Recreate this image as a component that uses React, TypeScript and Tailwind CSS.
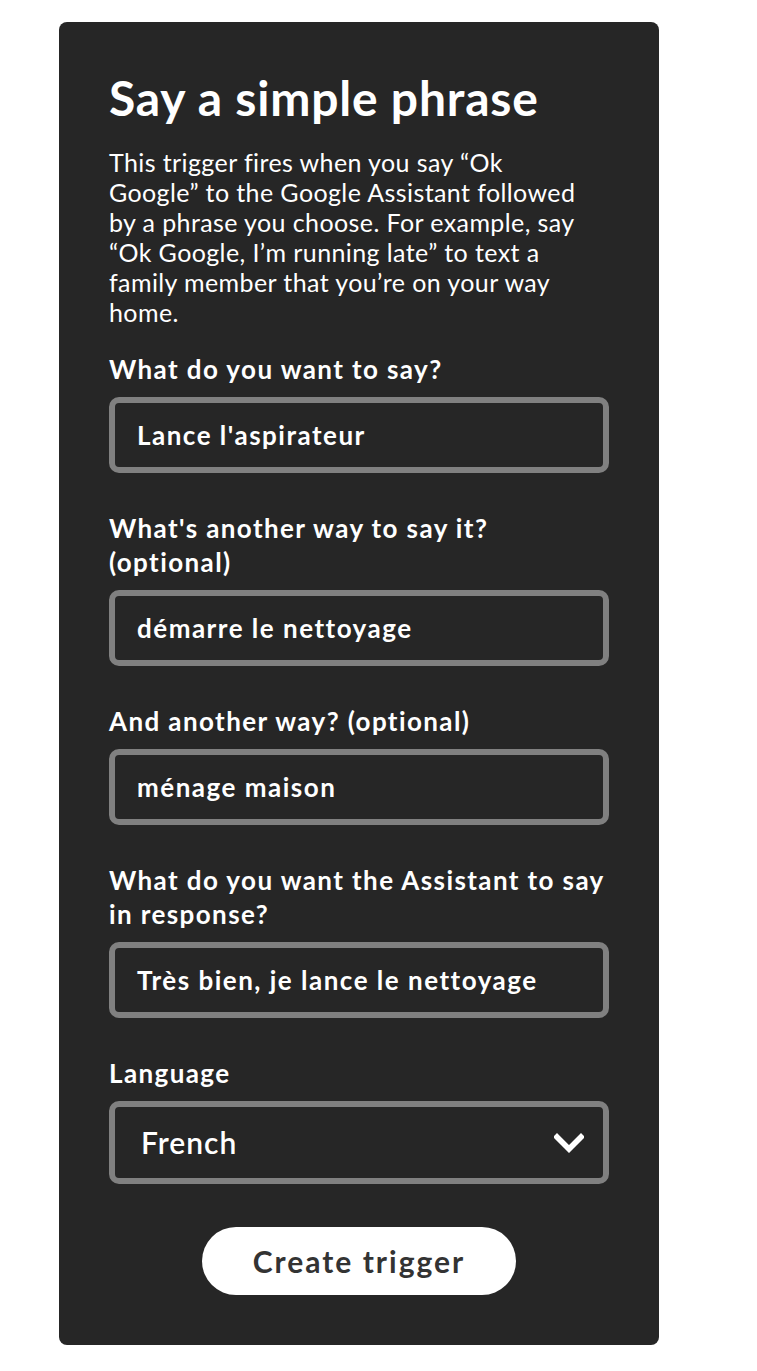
const baseFont = { fontFamily: "Lato, 'Open Sans', sans-serif" };

function Field({ label, value, first }: { label: React.ReactNode; value: string; first?: boolean }) {
  return (
    <div className={first ? "mt-[25px]" : "mt-[38px]"}>
      <label className="block text-[26px] font-bold leading-[34px] tracking-[1.4px] text-white">{label}</label>
      <div className="mt-[11px] flex h-[76px] items-center rounded-[10px] border-[6px] border-[#808080] px-[22px] text-[26px] font-bold tracking-[1.5px] text-white">
        {value}
      </div>
    </div>
  );
}

export default function App() {
  return (
    <div className="min-h-screen bg-white pl-[59px] pt-[22px]" style={baseFont}>
      <div className="w-[600px] rounded-lg bg-[#262626] px-[50px] pb-[50px] pt-[50px]">
        <h1 className="text-[48px] font-bold leading-[52px] tracking-[0.8px] text-white">Say a simple phrase</h1>
        <p className="mt-[23px] text-[25px] leading-[30px] tracking-[0.4px] text-white">
          This trigger fires when you say “Ok
          <br />
          Google” to the Google Assistant followed
          <br />
          by a phrase you choose. For example, say
          <br />
          “Ok Google, I’m running late” to text a
          <br />
          family member that you’re on your way
          <br />
          home.
        </p>

        <Field first label="What do you want to say?" value="Lance l'aspirateur" />
        <Field
          label={
            <>
              What's another way to say it?
              <br />
              (optional)
            </>
          }
          value="démarre le nettoyage"
        />
        <Field label="And another way? (optional)" value="ménage maison" />
        <Field
          label={
            <>
              What do you want the Assistant to say
              <br />
              in response?
            </>
          }
          value="Très bien, je lance le nettoyage"
        />

        {/* Language select */}
        <div className="mt-[38px]">
          <label className="block text-[26px] font-bold leading-[34px] tracking-[1.4px] text-white">Language</label>
          <div className="mt-[11px] flex h-[83px] items-center justify-between rounded-[10px] border-[6px] border-[#808080] pl-[26px] pr-[19px] text-white">
            <span className="text-[30px] font-semibold tracking-[1px]">French</span>
            <svg width="30" height="20" viewBox="0 0 30 20" fill="none">
              <path d="M3 4 L15 16 L27 4" stroke="white" strokeWidth="5.5" strokeLinecap="square" />
            </svg>
          </div>
        </div>

        <div className="mt-[43px] flex justify-center">
          <button className="h-[68px] w-[314px] rounded-full bg-white text-[30px] font-bold tracking-[2px] text-[#333]">
            Create trigger
          </button>
        </div>
      </div>
    </div>
  );
}
